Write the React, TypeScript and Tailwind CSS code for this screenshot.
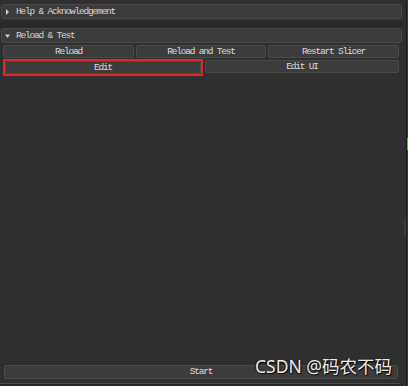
import React from "react";

const mono = { fontFamily: '"Liberation Mono", "DejaVu Sans Mono", monospace' };

const Header = ({ label, open }: { label: string; open?: boolean }) => (
  <div className="h-[15px] flex items-center rounded-[3px] border border-[#4a4a4a] bg-[#3b3b3b] pl-[3px] gap-[6px]">
    {open ? (
      <svg width="5" height="6" viewBox="0 0 5 6">
        <path d="M0 1.5 L5 1.5 L2.5 5 Z" fill="#d0d0d0" />
      </svg>
    ) : (
      <svg width="5" height="6" viewBox="0 0 5 6">
        <path d="M1 0 L4 3 L1 6 Z" fill="#d0d0d0" />
      </svg>
    )}
    <span className="text-[9.5px] leading-none tracking-[-1.2px] text-[#d6d6d6]" style={mono}>
      {label}
    </span>
  </div>
);

const Btn = ({ label, className = "" }: { label: string; className?: string }) => (
  <div
    className={
      "h-[13px] flex items-center justify-center rounded-[2px] border border-[#4b4b4b] bg-[#3c3c3c] text-[9.5px] leading-none tracking-[-1.2px] text-[#dcdcdc] " +
      className
    }
    style={mono}
  >
    {label}
  </div>
);

export default function App() {
  return (
    <div className="w-[408px] h-[386px] flex bg-[#2f2f2f] overflow-hidden relative">
      <div className="w-[403px] flex flex-col">
        <div className="pt-[4px] pl-[1px] pr-[1px]">
          <Header label="Help & Acknowledgement" />
        </div>
        <div className="h-[9px] flex flex-col">
          <div className="h-[2px]" />
          <div className="h-[7px] bg-[#292929]" />
        </div>
        <div className="pl-[1px] pr-[1px]">
          <Header label="Reload & Test" open />
        </div>
        <div className="pl-[3px] pr-[4px] pt-[2px] flex flex-col gap-[2px]">
          <div className="flex gap-[2px]">
            <Btn label="Reload" className="w-[131px]" />
            <Btn label="Reload and Test" className="w-[130px]" />
            <Btn label="Restart Slicer" className="flex-1" />
          </div>
          <div className="flex gap-[2px]">
            <div className="w-[200px] h-[17px] -mt-[1px] border-2 border-[#e0282c] flex">
              <Btn label="Edit" className="flex-1 h-[13px]" />
            </div>
            <Btn label="Edit UI" className="flex-1" />
          </div>
        </div>
        <div className="flex-1" />
        <div className="pl-[4px] pr-[5px]">
          <Btn label="Start" className="w-full h-[14px]" />
        </div>
        <div className="h-[4px]" />
        <div className="h-[1px] bg-[#4a4a4a] mr-[3px]" />
        <div className="h-[2px] bg-[#262626]" />
      </div>
      <div className="flex-1 flex">
        <div className="w-[3px] bg-[#2f2f2f] flex flex-col">
          <div className="h-[218px]" />
          <div className="h-[19px] w-[2px] ml-[1px] bg-[#3c3c3c]" />
        </div>
        <div className="w-[1px] bg-[#1c1c1c]" />
        <div className="w-[1px] bg-[#3a3a3a] flex flex-col">
          <div className="h-[138px]" />
          <div className="h-[12px] bg-[#6ab04c]" />
        </div>
      </div>
      <div
        className="absolute left-[255px] top-[358px] text-[17.5px] leading-none text-[#ececec]"
        style={{
          fontFamily: '"Noto Sans", "Noto Sans CJK SC", sans-serif',
          textShadow: "1px 1px 1px #000, -1px 0 1px #111",
        }}
      >
        CSDN @码农不码
      </div>
    </div>
  );
}
